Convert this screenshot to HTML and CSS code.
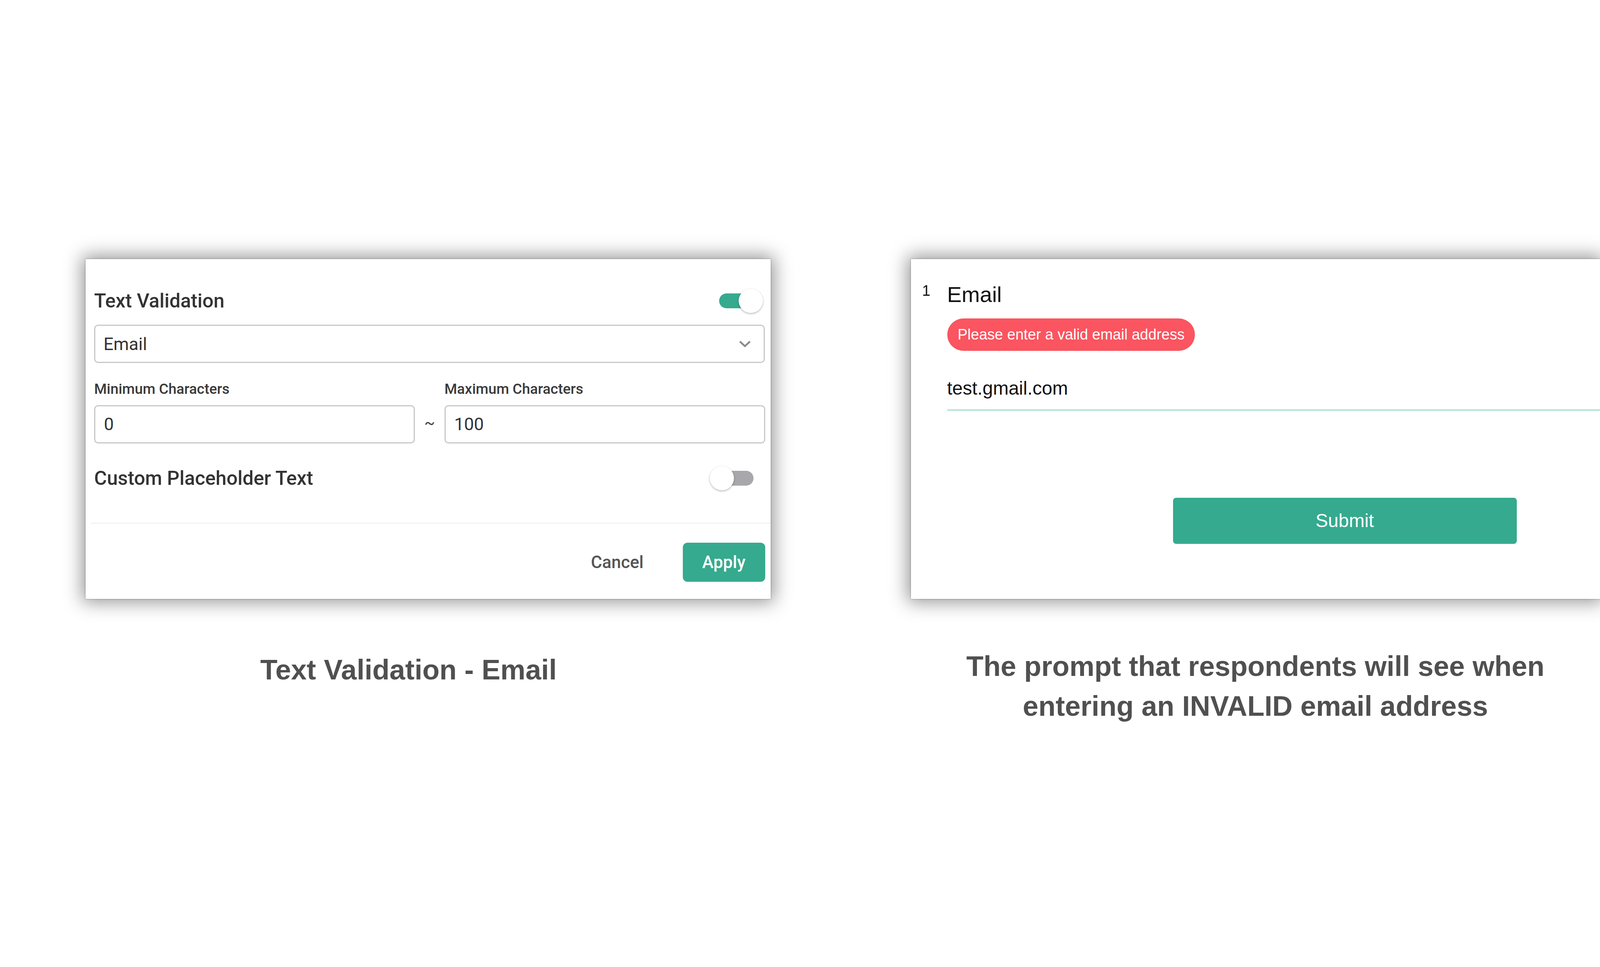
FILE: index.html
```html
<!DOCTYPE html>
<html lang="en">
<head>
	<meta charset="UTF-8">
	<title>Text Validation</title>
	<link rel="stylesheet" href="styles.css">
</head>
<body>
	<div class="page">
		<div class="col col-1">
			<div class="card panel">
				<div class="row">
					<span class="title">Text Validation</span>
					<span class="switch on"><span class="track"></span><span class="knob"></span></span>
				</div>
				<div class="select">
					<span>Email</span>
					<svg class="chev" width="30" height="17" viewBox="0 0 30 17"><polyline points="2,2 15,14 28,2" fill="none" stroke="#8a8a8a" stroke-width="4.5"/></svg>
				</div>
				<div class="range">
					<span class="lbl">Minimum Characters</span>
					<span></span>
					<span class="lbl">Maximum Characters</span>
					<div class="box">0</div>
					<span class="tilde">~</span>
					<div class="box">100</div>
				</div>
				<div class="row row-2">
					<span class="title">Custom Placeholder Text</span>
					<span class="switch"><span class="track"></span><span class="knob"></span></span>
				</div>
				<div class="line"></div>
				<div class="foot">
					<a class="cancel" href="javascript:void(0)">Cancel</a>
					<a class="apply" href="javascript:void(0)">Apply</a>
				</div>
			</div>
			<p class="caption cap-1">Text Validation - Email</p>
		</div>

		<div class="col col-2">
			<div class="card form">
				<div class="q">
					<span class="num">1</span>
					<div class="q-body">
						<div class="q-title">Email</div>
						<div class="err">Please enter a valid email address</div>
						<div class="answer">test.gmail.com</div>
						<a class="submit" href="javascript:void(0)">Submit</a>
					</div>
				</div>
			</div>
			<p class="caption cap-2">The prompt that respondents will see when<br>entering an INVALID email address</p>
		</div>
	</div>
</body>
</html>
```

FILE: styles.css
```css
body,div,p,span{
	margin:0px;
	padding:0px;
}
body{
	background:#fff;
	font-family:"Liberation Sans",Arial,sans-serif;
}
a{
	text-decoration:none;
	outline:none;
}
.page{
	display:flex;
	gap:359px;
	padding:663px 0 0 219px;
}
.col-1{
	width:1761px;
}
.col-2{
	width:1772px;
}
.card{
	background:#fff;
	height:870px;
	box-sizing:border-box;
	box-shadow:0 0 3px rgba(0,0,0,.45),0 0 44px 8px rgba(0,0,0,.42);
}

/* left panel */
.panel{
	font-family:Roboto,"Liberation Sans",sans-serif;
	color:#333;
	padding:76px 14px 0 22px;
}
.row{
	display:flex;
	justify-content:space-between;
	align-items:center;
	height:62px;
	padding-right:6px;
}
.title{
	font-size:50px;
	font-weight:500;
	line-height:62px;
}
.switch{
	position:relative;
	width:124px;
	height:62px;
}
.switch .track{
	position:absolute;
	left:12px;
	right:12px;
	top:12px;
	height:38px;
	border-radius:19px;
	background:#a8a7ab;
}
.switch .knob{
	position:absolute;
	left:0;
	top:0;
	width:62px;
	height:62px;
	border-radius:50%;
	background:#fff;
	box-shadow:0 2px 5px rgba(0,0,0,.3);
}
.switch.on .track{
	background:#35aa8e;
}
.switch.on .knob{
	left:auto;
	right:0;
}
.row-2{
	margin-top:58px;
	padding-right:18px;
}
.select{
	display:flex;
	justify-content:space-between;
	align-items:center;
	margin:30px 1px 0 0;
	height:98px;
	box-sizing:border-box;
	border:3px solid #c8c8cb;
	border-radius:10px;
	padding:0 33px 0 21px;
	font-size:45px;
}
.range{
	display:grid;
	grid-template-columns:1fr 76px 1fr;
	grid-template-rows:42px 98px;
	row-gap:20px;
	margin-top:46px;
}
.lbl{
	font-size:37px;
	font-weight:500;
	line-height:42px;
	color:#3a3a3a;
}
.box{
	box-sizing:border-box;
	border:3px solid #c8c8cb;
	border-radius:10px;
	padding-left:22px;
	font-size:45px;
	line-height:92px;
}
.tilde{
	text-align:center;
	font-size:40px;
	line-height:92px;
	color:#444;
}
.line{
	height:2px;
	background:#ececee;
	margin:83px -14px 0 -8px;
}
.foot{
	display:flex;
	justify-content:flex-end;
	align-items:center;
	margin-top:49px;
}
.cancel{
	color:#555;
	font-size:44px;
	font-weight:500;
	margin-right:100px;
}
.apply{
	display:block;
	width:211px;
	height:100px;
	line-height:100px;
	text-align:center;
	border-radius:12px;
	background:#35aa8e;
	color:#fff;
	font-size:44px;
	font-weight:500;
}

/* right form */
.form{
	padding:59px 0 0 29px;
}
.q{
	display:flex;
}
.num{
	width:64px;
	font-size:38px;
	line-height:38px;
	margin-top:3px;
	color:#111;
}
.q-body{
	flex:1;
}
.q-title{
	font-size:56px;
	line-height:64px;
	color:#111;
}
.err{
	display:inline-block;
	margin-top:29px;
	height:83px;
	line-height:83px;
	padding:0 27px;
	border-radius:42px;
	background:#fa5560;
	color:#fff;
	font-size:38px;
}
.answer{
	margin-top:68px;
	font-size:48px;
	line-height:56px;
	padding-bottom:26px;
	border-bottom:3px solid #a3dccb;
	color:#111;
}
.submit{
	display:block;
	width:880px;
	height:118px;
	line-height:118px;
	margin:223px 0 0 578px;
	text-align:center;
	border-radius:8px;
	background:#35aa8e;
	color:#fff;
	font-size:48px;
}

/* captions */
.caption{
	font-size:72px;
	font-weight:700;
	line-height:102px;
	color:#505050;
	text-align:center;
}
.cap-1{
	margin-top:130px;
	padding-right:100px;
}
.cap-2{
	margin-top:121px;
}
```
